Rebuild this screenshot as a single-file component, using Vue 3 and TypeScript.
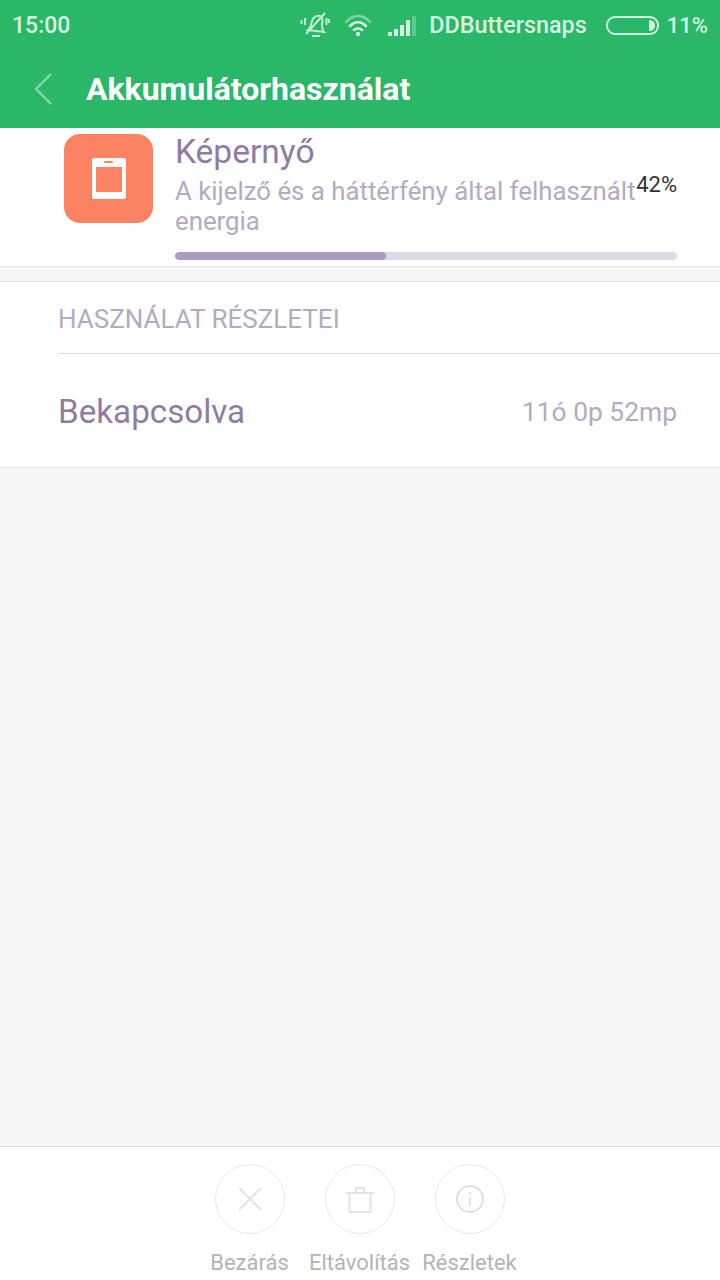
<template>
  <div class="page">
    <header class="top">
      <div class="status">
        <span class="time">15:00</span>
        <span class="status-right">
          <svg class="ic-bell" width="30" height="26" viewBox="0 0 30 26" fill="none" stroke="#c4ecd3" stroke-width="2">
            <path d="M8 18 C11 16 11 12 12 9 C13 5 17 3 20 4 C23 6 23 9 22 12 C22 15 22 18 24 20 Z" />
            <path d="M12 24 H20" />
            <path d="M6 22 L25 1" />
            <path d="M5 6 V13 M1.5 8 V12 M26.5 6 V13 M29 7 V11" />
          </svg>
          <svg class="ic-wifi" width="28" height="24" viewBox="0 0 28 24" fill="none" stroke-linecap="round">
            <path d="M2 9 C9 1 19 1 26 9" stroke="#7fd4a0" stroke-width="2.5" />
            <path d="M6 13 C11 8 17 8 22 13" stroke="#d6f3e1" stroke-width="2.5" />
            <path d="M10 17 C12 15 16 15 18 17" stroke="#d6f3e1" stroke-width="2.5" />
            <circle cx="14" cy="21" r="2.2" fill="#d6f3e1" />
          </svg>
          <span class="signal">
            <i class="s1"></i><i class="s2"></i><i class="s3"></i><i class="s4"></i><i class="s5"></i>
          </span>
          <span class="carrier">DDButtersnaps</span>
          <span class="battery"><span class="cap"></span></span>
          <span class="pct">11%</span>
        </span>
      </div>
      <div class="bar">
        <svg class="back" width="20" height="32" viewBox="0 0 20 32" fill="none" stroke="#8fdcae" stroke-width="2">
          <path d="M18 1 L3 16 L18 31" />
        </svg>
        <h1>Akkumulátorhasználat</h1>
      </div>
    </header>

    <section class="app-row">
      <div class="tile">
        <svg width="34" height="41" viewBox="0 0 34 41">
          <rect x="0" y="0" width="34" height="41" rx="2" fill="#fff" />
          <rect x="4" y="9" width="26" height="25" fill="#fb8262" />
          <rect x="12" y="3" width="9" height="2" rx="1" fill="#fb8262" />
        </svg>
      </div>
      <div class="app-body">
        <div class="app-text">
          <div class="app-copy">
            <div class="app-name">Képernyő</div>
            <div class="app-desc">A kijelző és a háttérfény által felhasznált energia</div>
          </div>
          <div class="app-pct">42%</div>
        </div>
        <div class="progress"><div class="fill" :style="{ width: percent + '%' }"></div></div>
      </div>
    </section>

    <section class="details">
      <div class="details-title">HASZNÁLAT RÉSZLETEI</div>
      <div class="details-row">
        <span class="label">Bekapcsolva</span>
        <span class="value">11ó 0p 52mp</span>
      </div>
    </section>

    <div class="spacer"></div>

    <footer class="actions">
      <div v-for="a in actions" :key="a.name" class="action">
        <span class="circle">
          <svg v-if="a.icon === 'close'" width="28" height="28" viewBox="0 0 28 28" fill="none" stroke="#e4e2ec" stroke-width="2">
            <path d="M3 3 L25 25 M25 3 L3 25" />
          </svg>
          <svg v-else-if="a.icon === 'trash'" width="28" height="30" viewBox="0 0 28 30" fill="none" stroke="#e4e2ec" stroke-width="2">
            <path d="M0 9 H28 M3.5 9 V28 H24.5 V9 M10 9 V4 H18 V9" />
          </svg>
          <svg v-else width="28" height="28" viewBox="0 0 28 28" fill="none" stroke="#d8d8dc" stroke-width="1.5">
            <circle cx="14" cy="14" r="13" />
            <path d="M14 12 V21 M14 7 V9" />
          </svg>
        </span>
        <span class="action-name">{{ a.name }}</span>
      </div>
    </footer>
  </div>
</template>

<script setup lang="ts">
interface Action {
  name: string,
  icon: string
}

const percent = 42
const actions: Action[] = [
  { name: 'Bezárás', icon: 'close' },
  { name: 'Eltávolítás', icon: 'trash' },
  { name: 'Részletek', icon: 'info' }
]
</script>

<style>
html, body {
  margin: 0;
  background: #f7f7f7;
}
</style>

<style scoped>
.page {
  width: 720px;
  height: 1280px;
  display: flex;
  flex-direction: column;
  overflow: hidden;
  font-family: Roboto, "Noto Sans", sans-serif;
  background: #f7f7f7;
}

.top {
  height: 128px;
  background: #2ab768;
  flex: none;
}

.status {
  height: 50px;
  display: flex;
  align-items: center;
  justify-content: space-between;
  padding: 0 12px 0 12px;
  color: #d6f3e1;
  font-size: 23px;
  font-weight: 500;
}

.status-right {
  display: flex;
  align-items: center;
}

.ic-bell { margin-right: 14px; }
.ic-wifi { margin-right: 16px; }

.signal {
  display: flex;
  align-items: flex-end;
  gap: 2px;
  height: 22px;
  margin-right: 13px;
}

.signal i {
  display: block;
  width: 4px;
  background: #d6f3e1;
}

.s1 { height: 4px; }
.s2 { height: 7px; }
.s3 { height: 11px; }
.s4 { height: 16px; }
.s5 { height: 20px; background: #5fca8b !important; }

.carrier {
  font-size: 23.4px;
  margin-right: 19px;
}

.pct { font-size: 22px; }

.battery {
  width: 47px;
  height: 15px;
  border: 2px solid #d6f3e1;
  border-radius: 9px;
  margin-right: 8px;
  display: flex;
  justify-content: flex-end;
  align-items: center;
  padding-right: 2px;
}

.cap {
  width: 6px;
  height: 11px;
  background: #d6f3e1;
  border-radius: 0 6px 6px 0;
}

.bar {
  height: 78px;
  display: flex;
  align-items: center;
  padding: 0 0 0 33px;
}

.back { margin-right: 33px; }

.bar h1 {
  margin: 0;
  font-size: 32px;
  font-weight: 700;
  color: #fff;
  letter-spacing: 0;
}

.app-row {
  flex: none;
  box-sizing: border-box;
  height: 139px;
  background: #fff;
  border-bottom: 1px solid #e2e2e2;
  display: flex;
  padding: 6px 43px 0 64px;
}

.tile {
  width: 89px;
  height: 89px;
  flex: none;
  border-radius: 16px;
  background: #fb8262;
  display: flex;
  align-items: center;
  justify-content: center;
  margin-right: 22px;
}

.app-body { flex: 1; min-width: 0; }

.app-text {
  display: flex;
  align-items: flex-start;
}

.app-copy { flex: 1; min-width: 0; }

.app-name {
  font-size: 33.5px;
  line-height: 36px;
  color: #8f7ba3;
}

.app-desc {
  font-size: 25.8px;
  line-height: 30px;
  color: #b5a9c3;
  margin-top: 6px;
}

.app-pct {
  font-size: 22px;
  line-height: 26px;
  color: #333;
  margin-top: 38px;
}

.progress {
  height: 8px;
  margin-top: 16px;
  border-radius: 4px;
  background: #dfd9e6;
  overflow: hidden;
}

.fill {
  height: 100%;
  background: #ad9bc0;
  border-radius: 4px;
}

.details {
  flex: none;
  margin-top: 14px;
  background: #fff;
  border-top: 1px solid #e2e2e2;
  border-bottom: 1px solid #e6e6e6;
  padding-left: 58px;
}

.details-title {
  height: 72px;
  box-sizing: border-box;
  line-height: 74px;
  font-size: 26px;
  color: #b5a9c3;
  border-bottom: 1px solid #dedede;
}

.details-row {
  height: 113px;
  box-sizing: border-box;
  padding-top: 2px;
  padding-right: 43px;
  display: flex;
  align-items: center;
  justify-content: space-between;
}

.label {
  font-size: 33.2px;
  color: #8f7ba3;
}

.value {
  font-size: 26.4px;
  color: #b5a9c3;
}

.spacer { flex: 1; }

.actions {
  flex: none;
  height: 134px;
  box-sizing: border-box;
  background: #fff;
  border-top: 1px solid #dcdcdc;
  display: flex;
  justify-content: center;
  padding: 17px 1px 0 0;
}

.action {
  width: 110px;
  display: flex;
  flex-direction: column;
  align-items: center;
}

.circle {
  width: 70px;
  height: 70px;
  box-sizing: border-box;
  border: 1px solid #e8e8e8;
  border-radius: 50%;
  display: flex;
  align-items: center;
  justify-content: center;
}

.action-name {
  margin-top: 16px;
  font-size: 22px;
  line-height: 26px;
  color: #b4b4b4;
  white-space: nowrap;
}
</style>
